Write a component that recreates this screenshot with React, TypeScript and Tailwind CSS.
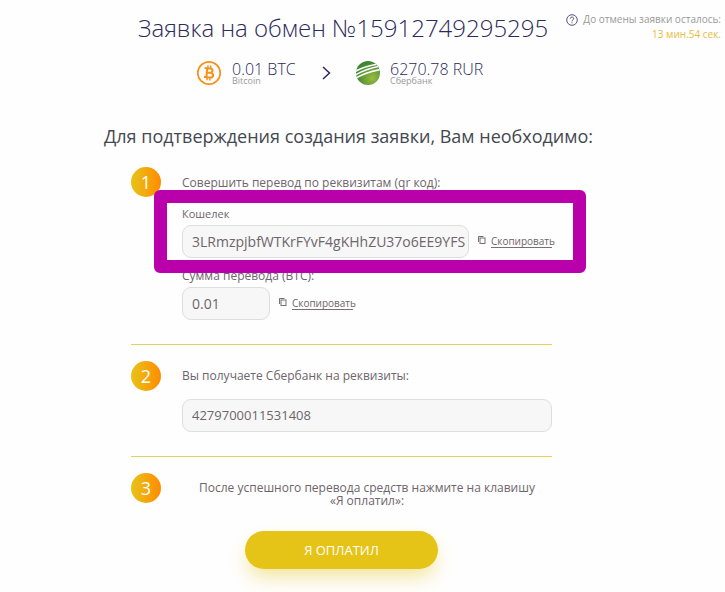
import type { ReactNode } from "react";

function BitcoinIcon() {
  return (
    <svg width="26" height="26" viewBox="0 0 26 26" className="shrink-0">
      <circle cx="13" cy="13" r="11.2" fill="none" stroke="#f7931a" strokeWidth="1.7" />
      <g transform="rotate(4 13 13)" fill="none" stroke="#f7931a" strokeWidth="2.1">
        <path d="M8.2 8.4h5.6c3.4 0 3.4 4.3 0 4.3h-3.2M8.2 17.4h6.2c3.8 0 3.8-4.7 0-4.7M10.8 8.4v9" />
        <path d="M11.5 5.4v3M14.3 5.4v3M11.5 17.4v3M14.3 17.4v3" strokeWidth="1.5" />
      </g>
    </svg>
  );
}

function SberbankIcon() {
  return (
    <svg width="24" height="24" viewBox="0 0 24 24" className="shrink-0">
      <defs>
        <radialGradient id="sber" cx="0.68" cy="0.72" r="0.7">
          <stop offset="0" stopColor="#9abb40" />
          <stop offset="0.5" stopColor="#6a9f38" />
          <stop offset="1" stopColor="#3d8435" />
        </radialGradient>
        <clipPath id="disc">
          <circle cx="12" cy="12" r="12" />
        </clipPath>
      </defs>
      <g clipPath="url(#disc)">
        <rect width="24" height="24" fill="url(#sber)" />
        <path d="M-1 10.6C6 6.5 13 4.6 21 3.2M-1 14.2C7 9.4 14 7 25 4.8M-1 17.4C7 12.6 15 10.2 26 8.2" fill="none" stroke="#fff" strokeWidth="1.6" />
      </g>
    </svg>
  );
}

function CopyLink({ className }: { className: string }) {
  return (
    <div className={`flex items-start ${className}`}>
      <svg width="8" height="9" viewBox="0 0 8 9" className="mt-px shrink-0" fill="none" stroke="#776f75" strokeWidth="1">
        <path d="M0.5 6V0.5H5.5" />
        <rect x="2" y="2" width="5" height="5.5" />
      </svg>
      <span className="ml-[5px] h-[13px] w-[61px] whitespace-nowrap border-b border-[#776f75] text-[10px] leading-[12px] tracking-[-0.02px]">
        Скопировать
      </span>
    </div>
  );
}

function StepBadge({ children }: { children: ReactNode }) {
  return (
    <div className="flex h-[30px] w-[30px] shrink-0 items-center justify-center rounded-full bg-linear-to-r from-[#e5c317] to-[#ff8a00] text-[18px] leading-[30px] text-white">
      {children}
    </div>
  );
}

function Field({ className, children }: { className: string; children: ReactNode }) {
  return (
    <div className={`flex h-[33px] items-center whitespace-nowrap rounded-[9px] border border-[#dedede] bg-[#f7f7f7] pl-[9px] text-[#6d656b] ${className}`}>
      {children}
    </div>
  );
}

export default function App() {
  return (
    <div className="relative h-[592px] w-[725px] overflow-hidden bg-[#fefefe] font-['Open_Sans','Noto_Sans',sans-serif] text-[#6d656b]">
      <header className="flex h-[60px] items-start pl-[138px] pr-1 pt-3">
        <h1 className="w-[410px] whitespace-nowrap text-[24px] font-light leading-[32px] text-[#2c2a5c]">
          Заявка на обмен №15912749295295
        </h1>
        <div className="ml-auto whitespace-nowrap text-right text-[10px]">
          <div className="flex h-[15px] items-center gap-[5px] text-[#999]">
            <svg width="12" height="12" viewBox="0 0 12 12" fill="none" stroke="#55507f" strokeWidth="1">
              <circle cx="6" cy="6" r="5.3" />
              <path d="M4.3 4.7C4.3 2.5 7.7 2.5 7.7 4.6C7.7 5.9 6 5.8 6 7.3M6 8.3V9.3" />
            </svg>
            <span>До отмены заявки осталось:</span>
          </div>
          <div className="h-[15px] leading-[15px] text-[#e5bd40]">13 мин.54 сек.</div>
        </div>
      </header>

      <div className="flex h-[66px] pl-[196px]">
        <BitcoinIcon />
        <div className="ml-[10px] w-[90px] whitespace-nowrap">
          <div className="h-[16px] text-[16px] font-light leading-[18px] text-[#2c2a5c]">0.01 BTC</div>
          <div className="text-[9px] leading-[9px] text-[#999]">Bitcoin</div>
        </div>
        <svg width="9" height="14" viewBox="0 0 9 14" className="mt-[6px]" fill="none" stroke="#2c2a5c" strokeWidth="1.5">
          <path d="M1 1L7.5 7L1 13" />
        </svg>
        <div className="ml-[25px] mt-px"><SberbankIcon /></div>
        <div className="ml-[10px] whitespace-nowrap">
          <div className="h-[16px] text-[16px] font-light leading-[18px] text-[#2c2a5c]">6270.78 RUR</div>
          <div className="text-[9px] leading-[9px] text-[#999]">Сбербанк</div>
        </div>
      </div>

      <h2 className="h-[41px] whitespace-nowrap pl-[104px] text-[18px] leading-[20px] text-[#444850]">
        Для подтверждения создания заявки, Вам необходимо:
      </h2>

      <main className="ml-[131px] w-[421px] text-[12px] leading-[13px]">
        <section className="flex h-[178px] border-b border-[#e8d15a]">
          <StepBadge>1</StepBadge>
          <div className="ml-[21px]">
            <div className="mt-[9px] h-[31px]">Совершить перевод по реквизитам (qr код):</div>
            <div className="h-[18px] text-[11px]">Кошелек</div>
            <div className="flex h-[44px]">
              <Field className="w-[287px] text-[14px]">3LRmzpjbfWTKrFYvF4gKHhZU37o6EE9YFS</Field>
              <CopyLink className="ml-[9px] mt-[10px]" />
            </div>
            <div className="h-[18px]">Сумма перевода (BTC):</div>
            <div className="flex">
              <Field className="w-[88px] text-[14px]">0.01</Field>
              <CopyLink className="ml-[9px] mt-[10px]" />
            </div>
          </div>
        </section>
        <section className="flex h-[112px] border-b border-[#e8d15a] pt-4">
          <StepBadge>2</StepBadge>
          <div className="ml-[21px]">
            <div className="mt-[8px] h-[30px]">Вы получаете Сбербанк на реквизиты:</div>
            <Field className="w-[370px] text-[13px]">4279700011531408</Field>
          </div>
        </section>
        <section className="flex pt-4">
          <StepBadge>3</StepBadge>
          <p className="ml-[21px] w-[370px] pt-[8px] text-center">
            После успешного перевода средств нажмите на клавишу
            <br />
            «Я оплатил»:
          </p>
        </section>
        <button className="ml-[114px] mt-[24px] block h-[38px] w-[193px] rounded-full bg-[#e5c317] text-[13px] text-white shadow-[0_10px_20px_-3px_rgba(229,195,23,0.45)]">
          Я ОПЛАТИЛ
        </button>
      </main>

      <div className="pointer-events-none absolute left-[154px] top-[190px] h-[83px] w-[432px] rounded-[6px] border-[13px] border-[#b900aa]" />
    </div>
  );
}
